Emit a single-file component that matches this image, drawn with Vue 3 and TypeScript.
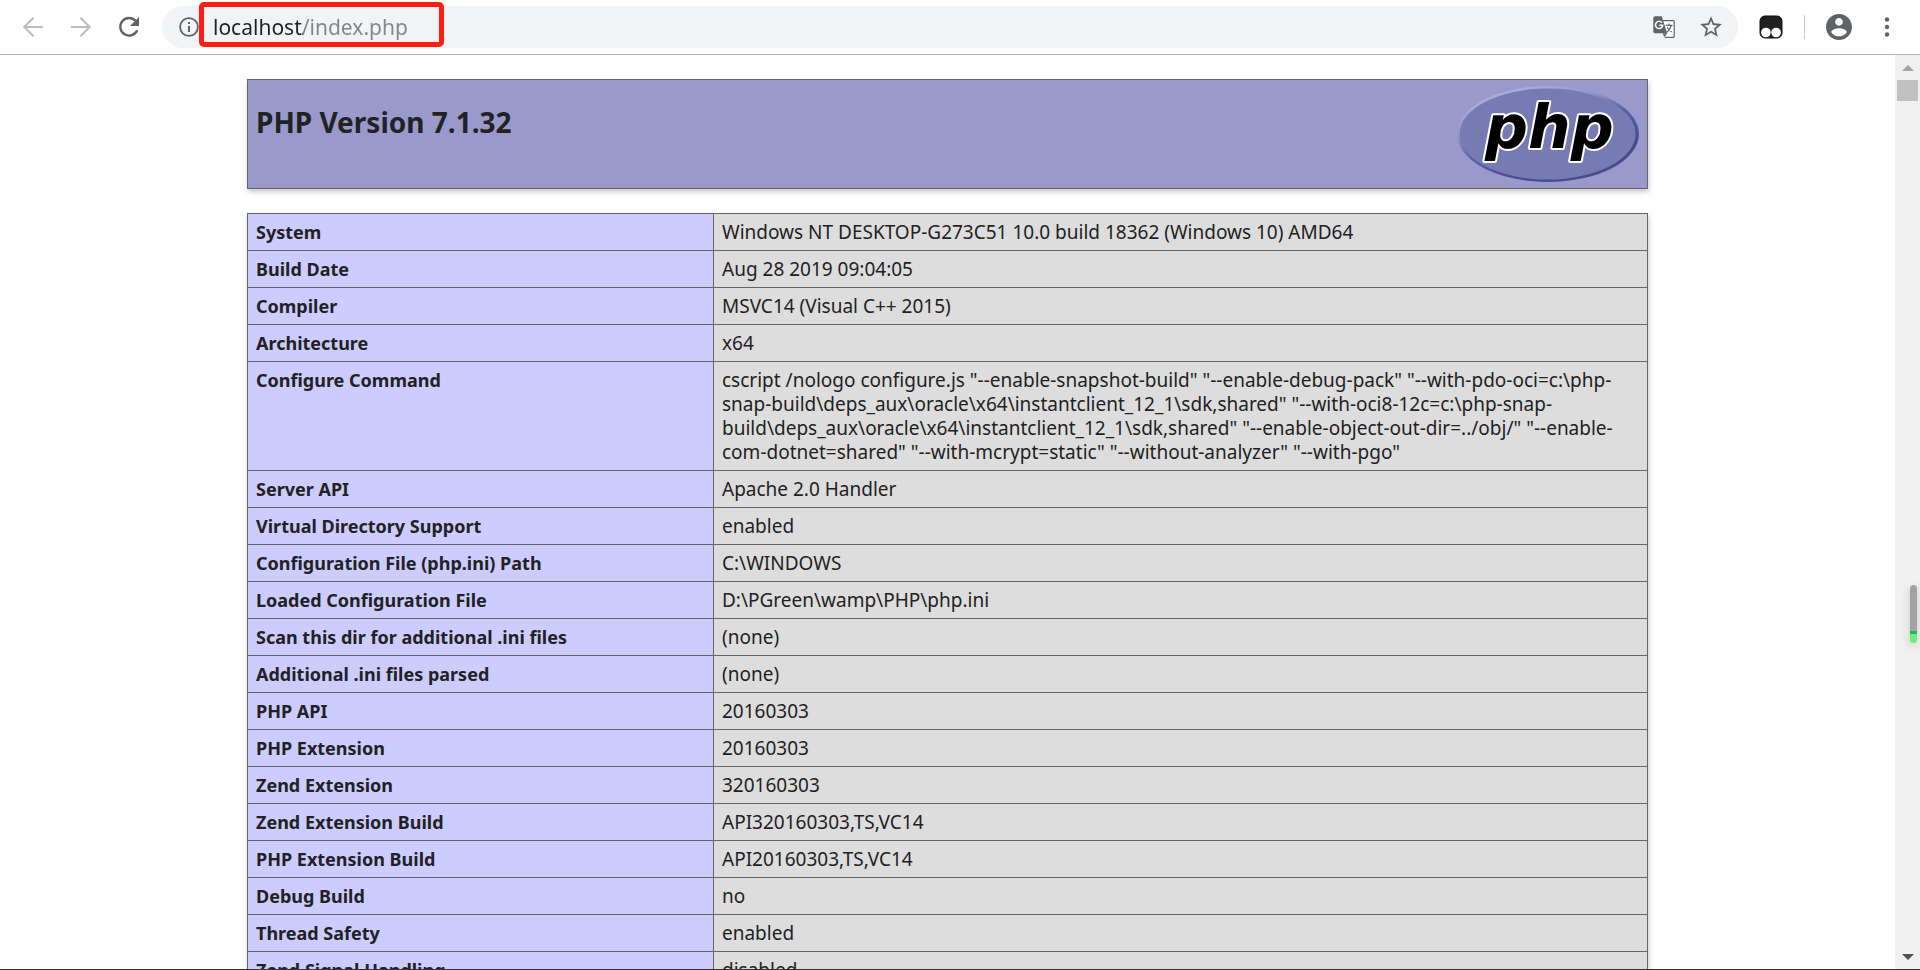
<script setup lang="ts">
import { ref } from 'vue'

interface InfoRow {
  label: string
  value: string
}

const address = ref('localhost/index.php')

const rows: InfoRow[] = [
  { label: 'System', value: 'Windows NT DESKTOP-G273C51 10.0 build 18362 (Windows 10) AMD64' },
  { label: 'Build Date', value: 'Aug 28 2019 09:04:05' },
  { label: 'Compiler', value: 'MSVC14 (Visual C++ 2015)' },
  { label: 'Architecture', value: 'x64' },
  {
    label: 'Configure Command',
    value:
      'cscript /nologo configure.js "--enable-snapshot-build" "--enable-debug-pack" "--with-pdo-oci=c:\\php-snap-build\\deps_aux\\oracle\\x64\\instantclient_12_1\\sdk,shared" "--with-oci8-12c=c:\\php-snap-build\\deps_aux\\oracle\\x64\\instantclient_12_1\\sdk,shared" "--enable-object-out-dir=../obj/" "--enable-com-dotnet=shared" "--with-mcrypt=static" "--without-analyzer" "--with-pgo"',
  },
  { label: 'Server API', value: 'Apache 2.0 Handler' },
  { label: 'Virtual Directory Support', value: 'enabled' },
  { label: 'Configuration File (php.ini) Path', value: 'C:\\WINDOWS' },
  { label: 'Loaded Configuration File', value: 'D:\\PGreen\\wamp\\PHP\\php.ini' },
  { label: 'Scan this dir for additional .ini files', value: '(none)' },
  { label: 'Additional .ini files parsed', value: '(none)' },
  { label: 'PHP API', value: '20160303' },
  { label: 'PHP Extension', value: '20160303' },
  { label: 'Zend Extension', value: '320160303' },
  { label: 'Zend Extension Build', value: 'API320160303,TS,VC14' },
  { label: 'PHP Extension Build', value: 'API20160303,TS,VC14' },
  { label: 'Debug Build', value: 'no' },
  { label: 'Thread Safety', value: 'enabled' },
  { label: 'Zend Signal Handling', value: 'disabled' },
]
</script>

<template>
  <div class="browser">
    <header class="toolbar">
      <nav class="nav">
        <button type="button" aria-label="Back" disabled>
          <svg width="24" height="24" viewBox="0 0 24 24" fill="none" stroke="#babcbe" stroke-width="2">
            <path d="M22 12H3.5M12.5 2.8L3.3 12l9.2 9.2" />
          </svg>
        </button>
        <button type="button" aria-label="Forward" disabled>
          <svg width="24" height="24" viewBox="0 0 24 24" fill="none" stroke="#babcbe" stroke-width="2">
            <path d="M2 12h18.5M11.5 2.8l9.2 9.2-9.2 9.2" />
          </svg>
        </button>
        <button type="button" aria-label="Reload">
          <svg width="24" height="24" viewBox="0 0 24 24">
            <path d="M20.2 15.2A8.8 8.8 0 1 1 18.6 5.9" fill="none" stroke="#5f6368" stroke-width="2.3" />
            <path d="M22 2v9h-9z" fill="#5f6368" />
          </svg>
        </button>
      </nav>

      <div class="omnibox">
        <button type="button" class="site-info" aria-label="Site information">
          <svg width="20" height="20" viewBox="0 0 20 20">
            <circle cx="10" cy="10" r="8.9" fill="none" stroke="#5f6368" stroke-width="1.8" />
            <path d="M9 9h2v6H9zM9 5h2v2H9z" fill="#5f6368" />
          </svg>
        </button>
        <div class="address">
          <input v-model="address" type="text" aria-label="Address" spellcheck="false" />
        </div>
        <div class="page-actions">
          <button type="button" aria-label="Translate this page">
            <svg width="24" height="24" viewBox="0 0 24 24">
              <path d="M10 5.7h11.2q1 0 1 1v14.6q0 1-1 1H13" fill="#fff" stroke="#5f6368" stroke-width="1.2" />
              <path d="M3.2 1.3h6.5l5.5 17H3.200a1.900 1.900 0 0 1-1.900-1.900V3.200a1.900 1.900 0 0 1 1.900-1.900z" fill="#5f6368" />
              <path d="M10.6 18.3h4.600L12.400 22.300z" fill="#5f6368" />
              <path d="M9.9 7.7A3.600 3.600 0 1 0 10.700 10.200H7.300" fill="none" stroke="#fff" stroke-width="1.5" />
              <path d="M13.6 10.3h7M17 8.600v1.700M19.300 10.500q-1 4-4.600 6.700M15.200 12.200q1.500 3.200 4.500 4.900" fill="none" stroke="#5f6368" stroke-width="1.2" />
            </svg>
          </button>
          <button type="button" aria-label="Bookmark this page">
            <svg width="26" height="26" viewBox="0 0 24 24">
              <path
                fill="#5f6368"
                d="M22 9.240l-7.190-.620L12 2 9.190 8.630 2 9.240l5.460 4.730L5.820 21 12 17.270 18.180 21l-1.630-7.030L22 9.240zM12 15.400l-3.760 2.270 1-4.280-3.320-2.880 4.380-.380L12 6.100l1.710 4.040 4.380.380-3.320 2.880 1 4.280L12 15.400z"
              />
            </svg>
          </button>
        </div>
      </div>

      <div class="tools">
        <button type="button" aria-label="Extension">
          <svg width="24" height="24" viewBox="0 0 24 24">
            <rect x="1" y="1" width="22" height="22" rx="5" fill="#202020" stroke="#111" />
            <circle cx="6.9" cy="17.5" r="4.8" fill="#fff" />
            <circle cx="17.1" cy="17.5" r="4.8" fill="#fff" />
          </svg>
        </button>
        <span class="divider"></span>
        <button type="button" aria-label="Profile">
          <svg width="26" height="26" viewBox="2 2 20 20">
            <path
              fill="#5f6368"
              d="M12 2C6.480 2 2 6.480 2 12s4.480 10 10 10 10-4.480 10-10S17.520 2 12 2zm0 3c1.660 0 3 1.340 3 3s-1.340 3-3 3-3-1.340-3-3 1.340-3 3-3zm0 14.200c-2.500 0-4.710-1.280-6-3.220.030-1.990 4-3.080 6-3.080 1.990 0 5.970 1.090 6 3.080-1.290 1.940-3.500 3.220-6 3.220z"
            />
          </svg>
        </button>
        <button type="button" aria-label="Menu">
          <svg width="28" height="24" viewBox="-2 0 28 24" fill="#5f6368">
            <circle cx="12" cy="4.5" r="2.2" />
            <circle cx="12" cy="12" r="2.2" />
            <circle cx="12" cy="19.5" r="2.2" />
          </svg>
        </button>
      </div>
    </header>

    <div class="viewport">
      <main class="page">
        <section class="banner">
          <h1>PHP Version 7.1.32</h1>
          <a href="#" class="logo" aria-label="PHP home page">
            <svg width="182" height="96" viewBox="0 0 182 96">
              <defs>
                <linearGradient id="rim" x1="0.2" y1="0" x2="0.8" y2="1">
                  <stop offset="0" stop-color="#b4b6dc" />
                  <stop offset="0.3" stop-color="#9295c8" />
                  <stop offset="0.5" stop-color="#5c5fa3" />
                  <stop offset="0.8" stop-color="#484b8f" />
                </linearGradient>
              </defs>
              <ellipse cx="91" cy="48" rx="91" ry="48" fill="url(#rim)" />
              <ellipse cx="90.5" cy="48" rx="88" ry="45.5" fill="#777bb3" />
              <text x="28" y="62" class="wordmark">php</text>
            </svg>
          </a>
        </section>

        <table class="info">
          <tbody>
            <tr v-for="row in rows" :key="row.label">
              <th scope="row">{{ row.label }}</th>
              <td>{{ row.value }}</td>
            </tr>
          </tbody>
        </table>
      </main>

      <div class="scrollbar">
        <svg width="12" height="6" viewBox="0 0 12 6"><path d="M0 6L6 0l6 6z" fill="#a3a3a3" /></svg>
        <div class="thumb"></div>
        <svg class="down" width="12" height="6" viewBox="0 0 12 6"><path d="M0 0h12L6 6z" fill="#505050" /></svg>
      </div>
      <div class="meter"></div>
    </div>
  </div>
</template>

<style>
body {
  margin: 0;
  overflow: hidden;
}
</style>

<style scoped>
.browser {
  box-sizing: border-box;
  height: 100vh;
  display: flex;
  flex-direction: column;
  background: #fff;
  border-bottom: 1px solid #35352f;
  color: #222;
  font-family: 'Noto Sans', 'Open Sans', sans-serif;
}

button {
  display: flex;
  padding: 0;
  border: 0;
  background: none;
}

.toolbar {
  display: flex;
  align-items: center;
  height: 54px;
  flex: none;
  border-bottom: 1px solid #b3b3b3;
}

.nav {
  display: flex;
  gap: 24px;
  padding: 0 21px;
}

.omnibox {
  flex: 1;
  display: flex;
  align-items: center;
  height: 42px;
  padding: 0 14px 0 17px;
  border-radius: 21px;
  background: #f1f3f4;
}

.address {
  position: relative;
  flex: 1;
  padding-left: 14px;
}

.address::after {
  content: '';
  position: absolute;
  top: -9px;
  bottom: -4px;
  left: 0;
  width: 235px;
  border: 5px solid #ff1d12;
  border-radius: 5px;
  pointer-events: none;
}

.address input {
  display: block;
  width: 100%;
  height: 32px;
  padding: 0;
  border: 0;
  outline: 0;
  font: 21px/32px 'Noto Sans', 'Open Sans', sans-serif;
  background: linear-gradient(90deg, #202124 90px, #80868b 90px);
  background-clip: text;
  -webkit-background-clip: text;
  -webkit-text-fill-color: transparent;
}

.page-actions {
  display: flex;
  align-items: center;
  gap: 22px;
}

.tools {
  display: flex;
  align-items: center;
  gap: 21px;
  padding: 0 19px 0 21px;
}

.divider {
  width: 1px;
  height: 24px;
  background: #c8cacc;
}

.viewport {
  position: relative;
  flex: 1;
  min-height: 0;
  display: flex;
}

.page {
  flex: 1;
  overflow: hidden;
  display: flex;
  flex-direction: column;
  align-items: center;
  gap: 24px;
  padding: 24px;
}

.banner,
.info {
  box-sizing: border-box;
  flex: none;
  width: 100%;
  max-width: 1401px;
  box-shadow: 1px 3px 5px #ccc;
}

.banner {
  display: flex;
  justify-content: space-between;
  align-items: flex-start;
  padding: 6px 8px;
  border: 1px solid #666;
  background: #99c;
}

h1 {
  margin: 18px 0 0;
  font-size: 28px;
  line-height: 36px;
  font-weight: 700;
}

.logo {
  display: flex;
}

.wordmark {
  font: italic bold 60px 'DejaVu Sans', sans-serif;
  fill: #000;
  stroke: #fff;
  stroke-width: 4px;
  stroke-linejoin: round;
  paint-order: stroke;
}

.info {
  border-collapse: collapse;
  table-layout: fixed;
  font-size: 18px;
  line-height: 24px;
}

.info th,
.info td {
  padding: 6px 8px;
  border: 1px solid #666;
  text-align: left;
  vertical-align: top;
}

.info th {
  width: 449px;
  background: #ccf;
  font-weight: 700;
}

.info td {
  background: #ddd;
  font-size: 19px;
  overflow-wrap: break-word;
}

.scrollbar {
  flex: none;
  display: flex;
  flex-direction: column;
  align-items: center;
  gap: 9px;
  width: 25px;
  padding: 10px 0 9px;
  box-sizing: border-box;
  background: #f0f0f0;
}

.thumb {
  width: 21px;
  height: 21px;
  background: #c1c1c1;
}

.down {
  margin-top: auto;
}

.meter {
  position: absolute;
  top: 530px;
  right: 3px;
  width: 7px;
  height: 58px;
  border-radius: 4px;
  background: linear-gradient(#a3a3a3 46px, #14c05c 46px, #14c05c 49px, #6bef75 49px);
  box-shadow: 0 3px 8px #ccc;
}
</style>
